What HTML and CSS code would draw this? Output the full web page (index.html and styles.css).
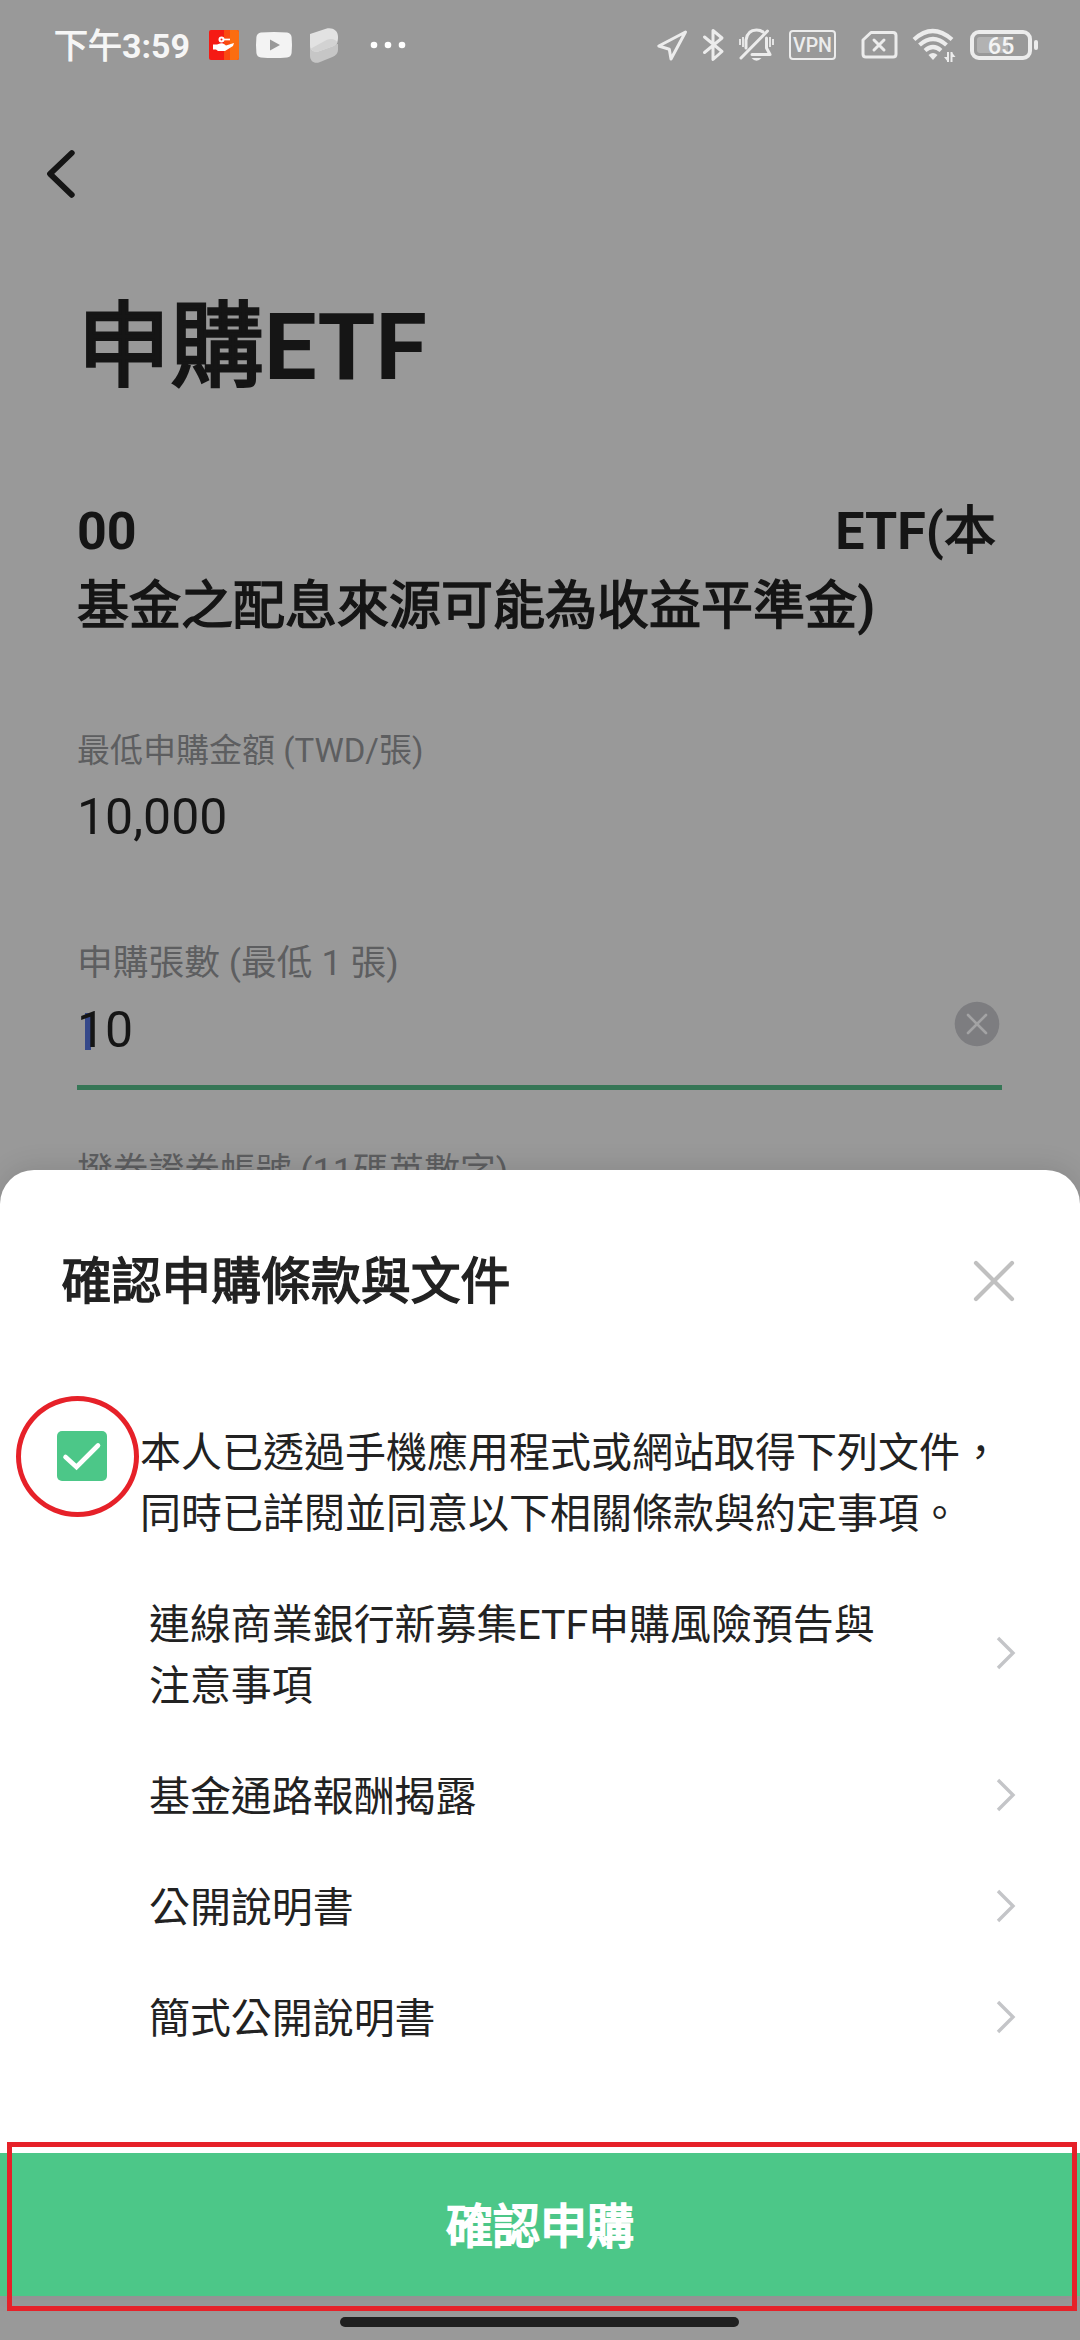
FILE: index.html
```html
<!DOCTYPE html>
<html lang="zh-Hant">
<head>
<meta charset="utf-8">
<title>申購ETF</title>
<link rel="stylesheet" href="styles.css">
</head>
<body>
<div class="screen">
  <header class="status">
    <span class="clock"><span class="han">下午</span>3:59</span>
    <svg class="ic-bank" width="30" height="30" viewBox="0 0 30 30">
      <rect width="30" height="30" rx="2" fill="#f51a14"/>
      <path d="M15 0h6v30h-6z" fill="#fa4a10"/><path d="M21 0h7a2 2 0 0 1 2 2v26a2 2 0 0 1-2 2h-7z" fill="#fb6d10"/>
      <circle cx="12.5" cy="9.500" r="2" fill="none" stroke="#fff" stroke-width="2"/>
      <path d="M14.500 9.500H21" stroke="#fff" stroke-width="1.700"/>
      <path d="M4 14.500h4l3-1q3-.5 4 .5l2 1.500 8-2.500-1 3-8 5H9l-2-1.500H4z" fill="#fff"/>
    </svg>
    <svg class="ic-tube" width="36" height="26" viewBox="0 0 36 26">
      <path fill-rule="evenodd" fill="#f3f3f3" d="M5 .5Q18-.5 31 .5 35 1 35.600 5q.8 8 0 16-.6 4-4.600 4.500-13 1-26 0Q1 25 .4 21q-.8-8 0-16Q1 1 5 .5zM14 7.500v11L24 13z"/>
    </svg>
    <svg class="ic-leaf" width="28" height="35" viewBox="0 0 28 35">
      <path d="M0 18v9.500c0 6 4.500 8.500 9.500 6.700L23 28.800c3-1.300 5-4 5-7V16z" fill="#c6c6c6"/>
      <path d="M0 6 16 .7C22-1 28 2 28 8.500v2c0 4-2 6.500-5 7.700L9 23.200C4 25 0 22 0 17z" fill="#e2e2e2"/>
      <path d="M1 20.500 17 11.800C21 10 26 11 27.500 14.500 26.500 16.500 25 17.500 23 18.200L9 23.200C5.500 24.400 2.500 23.500 1 20.500z" fill="#d2d2d2"/>
    </svg>
    <svg class="ic-more" width="36" height="8" viewBox="0 0 36 8" fill="#fff"><circle cx="4" cy="4" r="3.300"/><circle cx="18" cy="4" r="3.300"/><circle cx="32" cy="4" r="3.300"/></svg>
    <div class="status-right">
      <svg width="31" height="31" viewBox="0 0 31 31"><path d="M28.500 2 1.800 16l10.500 3.200L14 29z" class="ln"/></svg>
      <svg class="ic-bt" width="22" height="34" viewBox="0 0 22 34"><path d="M1.500 9 19 23.500 10 31.500V2.500l9 7.500L1.500 24.500" class="ln"/></svg>
      <svg class="ic-bell" width="36" height="34" viewBox="0 0 36 34">
        <path d="M7 20V12C8 5 12 2 17.500 2q4 0 6.500 2M27.500 10v10l3.500 6.500H13" class="ln"/>
        <path d="M2 30 28.500 3" class="ln"/>
        <path d="M1 11v6M4 9v10M31 9v10M34 11v6" stroke="#ececec" stroke-width="1.800"/>
        <path d="M12.500 30h10q-5 5.500-10 0z" fill="#ececec"/>
      </svg>
      <span class="vpn">VPN</span>
      <svg class="ic-sim" width="37" height="30" viewBox="0 0 37 30"><path d="M10 2.500h22q3 0 3 3v18.500q0 3-3 3H5q-3 0-3-3V10zM13 10l10 10M23 10 13 20" class="ln"/></svg>
      <svg class="ic-wifi" width="43" height="35" viewBox="0 0 43 35">
        <path d="M2 11.500q18.500-17 38 0M7.500 17q13.500-12 27 0M13 22.500q8-7 16 0" class="ln wifi"/>
        <path d="M16.500 27q4.500-4 9 0L21 32z" fill="#ececec"/>
        <path d="M36 24v10M39.500 34V24" stroke="#ececec" stroke-width="2" fill="none"/><path d="M32 29h4v5zM43.500 29h-4v-5z" fill="#ececec"/>
      </svg>
      <span class="battery"><span class="level">65</span></span><i class="nub"></i>
    </div>
  </header>

  <main class="page">
    <svg class="back" width="30" height="50" viewBox="0 0 30 50"><path d="M25.800 4 4 24.800l21.800 21" fill="none" stroke="#151515" stroke-width="5.800" stroke-linecap="round" stroke-linejoin="round"/></svg>
    <div class="form">
      <h1 class="title"><span class="han">申購</span>ETF</h1>
      <h2 class="fund"><span class="fund-top"><span>00</span><span>ETF(<span class="han">本</span></span></span><span class="han">基金之配息來源可能為收益平準金</span>)</h2>
      <div class="label small">最低申購金額 (TWD/張)</div>
      <div class="value">10,000</div>
      <div class="label units">申購張數 (最低 1 張)</div>
      <div class="input">
        <span class="value"><i class="caret"></i><span class="digits">10</span></span>
        <svg class="clear" width="46" height="46" viewBox="0 0 46 46"><circle cx="23" cy="23" r="22.300" fill="#7d7d80"/><path d="m14 14 18 18M32 14 14 32" stroke="#a3a3a4" stroke-width="2.600" stroke-linecap="round"/></svg>
      </div>
      <div class="label account">撥券證券帳號 (11碼英數字)</div>
    </div>
  </main>

  <section class="sheet">
    <div class="sheet-head">
      <h3 class="sheet-title"><span class="han">確認申購條款與文件</span></h3>
      <svg class="close" width="42" height="42" viewBox="0 0 42 42"><path d="m3 3 36 36M39 3 3 39" stroke="#c0c0c0" stroke-width="4.200" stroke-linecap="round"/></svg>
    </div>
    <div class="agree">
      <span class="check">
        <svg width="50" height="50" viewBox="0 0 50 50"><rect width="50" height="50" rx="5" fill="#4cc788"/><path d="M8.500 26 19.500 36 41 14.500" fill="none" stroke="#fff" stroke-width="4.600" stroke-linecap="round"/></svg>
        <i class="ring"></i>
      </span>
      <p class="agree-text">本人已透過手機應用程式或網站取得下列文件，<br>同時已詳閱並同意以下相關條款與約定事項。</p>
    </div>
    <ul class="docs">
      <li><span>連線商業銀行新募集ETF申購風險預告與<br>注意事項</span><svg class="chev" width="20" height="34" viewBox="0 0 20 34"><path d="m2 2 15 15L2 32"/></svg></li>
      <li><span>基金通路報酬揭露</span><svg class="chev" width="20" height="34" viewBox="0 0 20 34"><path d="m2 2 15 15L2 32"/></svg></li>
      <li><span>公開說明書</span><svg class="chev" width="20" height="34" viewBox="0 0 20 34"><path d="m2 2 15 15L2 32"/></svg></li>
      <li><span>簡式公開說明書</span><svg class="chev" width="20" height="34" viewBox="0 0 20 34"><path d="m2 2 15 15L2 32"/></svg></li>
    </ul>
    <div class="confirm"><span class="han">確認申購</span><i class="frame"></i></div>
  </section>
  <i class="home"></i>
</div>
</body>
</html>
```
FILE: styles.css
```css
* { box-sizing: border-box; }
body {
  margin: 0;
  font-family: Roboto, "Noto Sans CJK TC", sans-serif;
  color: #151515;
}
h1, h2, h3, p, ul { margin: 0; padding: 0; }
svg { display: block; flex: none; overflow: visible; }
i { font-style: normal; }

/* emboldened Han text, lighter than the bold face */
.han {
  font-weight: 400;
  -webkit-text-stroke: 0.03em currentColor;
}

.screen {
  position: relative;
  width: 1080px;
  height: 2340px;
  overflow: hidden;
  background: #999;
}

/* status bar */
.status {
  display: flex;
  align-items: center;
  height: 90px;
  padding: 0 42px 0 54px;
}
.clock {
  width: 155px;
  padding-top: 2px;
  font-size: 34px;
  line-height: 44px;
  font-weight: 700;
  color: #f6f6f6;
  white-space: nowrap;
}
.ic-tube { margin-left: 17px; }
.ic-leaf { margin-left: 18px; }
.ic-more { margin-left: 32px; }
.status-right {
  display: flex;
  align-items: center;
  margin-left: auto;
}
.ln {
  fill: none;
  stroke: #ececec;
  stroke-width: 3;
  stroke-linecap: round;
  stroke-linejoin: round;
}
.wifi { stroke-width: 4.2; stroke-linecap: butt; }
.ic-bt { margin-left: 15px; }
.ic-bell { margin-left: 14px; }
.vpn {
  width: 47px;
  height: 30px;
  margin-left: 14px;
  border: 2.5px solid #ececec;
  border-radius: 4px;
  font-size: 19.5px;
  line-height: 27px;
  font-weight: 500;
  text-align: center;
  color: #ececec;
}
.ic-sim { margin-left: 25px; }
.ic-wifi { margin-left: 14px; }
.battery {
  width: 62px;
  height: 30px;
  margin-left: 15px;
  padding: 3px;
  border: 4px solid #ececec;
  border-radius: 9px;
}
.level {
  display: block;
  width: 48px;
  height: 16px;
  border-radius: 3px;
  background: linear-gradient(90deg, #b2b2b2 65%, transparent 65%);
  font-size: 23.5px;
  line-height: 18px;
  font-weight: 500;
  text-align: center;
  color: #f4f4f4;
}
.nub {
  width: 4px;
  height: 10px;
  margin-left: 2px;
  border-radius: 2px;
  background: #ececec;
}

/* form behind the sheet */
.page { padding-top: 59px; }
.back { margin-left: 46px; }
.form { padding: 93px 78px 0 77px; }
.title {
  font-size: 93.5px;
  line-height: 110px;
  font-weight: 700;
}
.fund {
  margin-top: 91.6px;
  font-size: 52px;
  line-height: 75px;
  font-weight: 700;
  white-space: nowrap;
}
.fund-top {
  display: flex;
  justify-content: space-between;
  width: 919px;
}
.label {
  font-size: 35.75px;
  line-height: 40px;
  color: #5d5e60;
  white-space: nowrap;
}
.small { margin-top: 87px; font-size: 33px; }
.units { margin-top: 96.7px; }
.account { margin-top: 61.8px; }
.value {
  position: relative;
  margin-top: 17.4px;
  font-size: 50px;
  line-height: 58px;
}
.input {
  display: flex;
  justify-content: space-between;
  height: 107px;
  padding-top: 18px;
  border-bottom: 5px solid #367656;
}
.input .value { margin: 0; }
.digits { position: relative; }
.caret {
  position: absolute;
  left: 8px;
  top: 12px;
  width: 6px;
  height: 37px;
  background: #36498a;
}
.clear { margin-right: 2px; }

/* bottom sheet */
.sheet {
  position: absolute;
  left: 0;
  right: 0;
  top: 1170px;
  height: 1126px;
  padding-top: 82px;
  border-radius: 34px 34px 0 0;
  background: #fff;
  color: #222;
  box-shadow: 0 -4px 26px rgba(0, 0, 0, 0.1);
}
.sheet-head {
  display: flex;
  justify-content: space-between;
  height: 60px;
  padding: 0 65px 0 61.5px;
}
.sheet-title {
  font-size: 49.9px;
  line-height: 60px;
}
.close { margin-top: 8px; }
.agree {
  display: flex;
  padding: 111px 0 0 57px;
}
.check {
  position: relative;
  width: 83px;
  padding-top: 8px;
}
.ring {
  position: absolute;
  left: -41px;
  top: -27px;
  width: 123px;
  height: 121px;
  border: 5px solid #e62129;
  border-radius: 50%;
}
.agree-text {
  font-size: 41px;
  line-height: 60.5px;
  white-space: nowrap;
}
.docs {
  margin-top: 26px;
  padding: 0 64px 0 149px;
  list-style: none;
}
.docs li {
  display: flex;
  align-items: center;
  justify-content: space-between;
  padding: 25.25px 0;
  font-size: 40.95px;
  line-height: 60.5px;
}
.chev {
  margin-bottom: 5px;
  fill: none;
  stroke: #c4c5c8;
  stroke-width: 3.4;
}
.confirm {
  position: absolute;
  left: 0;
  right: 0;
  bottom: 0;
  height: 143px;
  padding-top: 2px;
  background: #4cc788;
  font-size: 47px;
  line-height: 143px;
  text-align: center;
  color: #fff;
}
.confirm .han { -webkit-text-stroke-width: 0.045em; }
.frame {
  position: absolute;
  left: 7px;
  top: -11px;
  width: 1070px;
  height: 169px;
  border: 5px solid #e62129;
}
.home {
  position: absolute;
  left: 340px;
  top: 2317px;
  width: 399px;
  height: 10px;
  border-radius: 5px;
  background: #202020;
}
```
